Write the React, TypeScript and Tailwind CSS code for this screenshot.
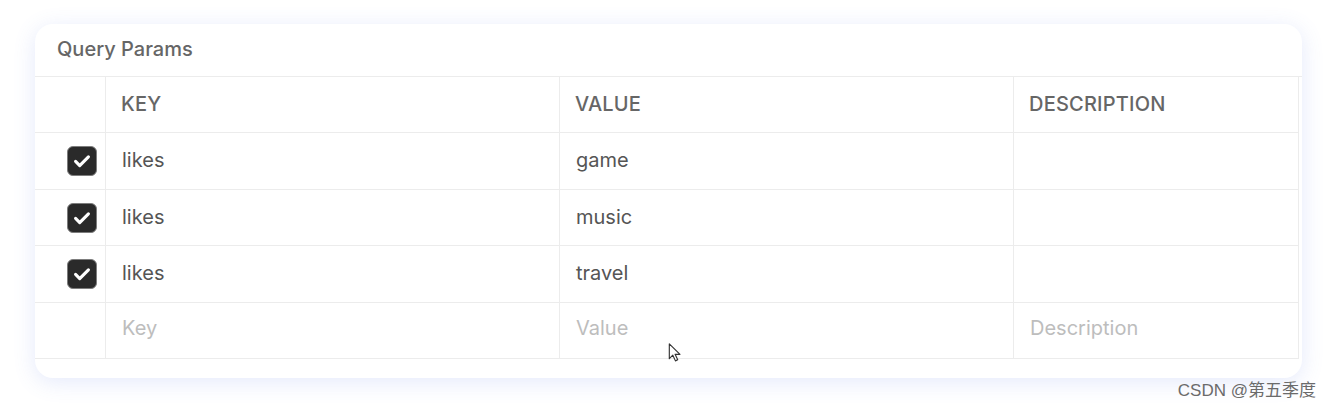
import React from "react";

interface Param {
  key: string;
  value: string;
  description: string;
  enabled: boolean;
}

const params: Param[] = [
  { key: "likes", value: "game", description: "", enabled: true },
  { key: "likes", value: "music", description: "", enabled: true },
  { key: "likes", value: "travel", description: "", enabled: true },
];

// row heights follow the screenshot's grid lines (132, 189, 245, 302)
const rowHeights = ["h-[57px]", "h-[56px]", "h-[57px]"];

const Check = () => (
  <div className="w-[30px] h-[30px] rounded-[6px] bg-[#2a2a2a] border border-[#7d7d7d] flex items-center justify-center">
    <svg viewBox="0 0 24 24" className="w-[22px] h-[22px]" fill="none">
      <path
        d="M5 12.5l4.5 4.5L19 7.5"
        stroke="white"
        strokeWidth={3.4}
        strokeLinecap="round"
        strokeLinejoin="round"
      />
    </svg>
  </div>
);

const cell = "border-r border-b border-[#ececec] flex items-center";
const head = "pl-[15px] pb-[2px] text-[20px] font-medium text-[#666] tracking-[0.2px]";
const body = "pl-[16px] pb-[2px] text-[20px] text-[#555]";
const hint = "pl-[16px] pb-[6px] text-[20px] text-[#bdbdbd]";

const App = () => {
  return (
    <div className="w-[1332px] h-[409px] bg-white relative font-['Inter',sans-serif] overflow-hidden">
      <div className="pt-[24px] pl-[35px]">
        <div className="w-[1267px] h-[354px] bg-white rounded-[18px] shadow-[0_4px_22px_rgba(90,120,230,0.16)] overflow-hidden">
          <div className="h-[53px] border-b border-[#ececec] flex items-center pl-[22px] pb-[2px]">
            <span className="text-[20px] font-medium text-[#666]">Query Params</span>
          </div>
          <div className="grid grid-cols-[71px_454px_454px_285px] w-[1264px] border-r border-[#ececec]">
            <div className={`${cell} h-[56px]`} />
            <div className={`${cell} h-[56px] ${head}`}>KEY</div>
            <div className={`${cell} h-[56px] ${head}`}>VALUE</div>
            <div className={`${cell} h-[56px] ${head}`}>DESCRIPTION</div>
            {params.map((p, i) => (
              <React.Fragment key={i}>
                <div className={`${cell} ${rowHeights[i]} justify-end pr-[8px]`}>
                  {p.enabled && <Check />}
                </div>
                <div className={`${cell} ${rowHeights[i]} ${body}`}>{p.key}</div>
                <div className={`${cell} ${rowHeights[i]} ${body}`}>{p.value}</div>
                <div className={`${cell} ${rowHeights[i]} ${body}`}>{p.description}</div>
              </React.Fragment>
            ))}
            <div className={`${cell} h-[56px]`} />
            <div className={`${cell} h-[56px] ${hint}`}>Key</div>
            <div className={`${cell} h-[56px] ${hint}`}>Value</div>
            <div className={`${cell} h-[56px] ${hint}`}>Description</div>
          </div>
        </div>
      </div>

      <svg
        viewBox="0 0 16 24"
        className="absolute left-[668px] top-[342px] w-[14px] h-[22px]"
        fill="white"
        stroke="#333"
        strokeWidth={1.3}
        strokeLinejoin="round"
      >
        <path d="M1.5 1.5v17l4-4 3 6.5 2.6-1.2-3-6.3h5.6z" />
      </svg>

      <div className="absolute right-[16px] top-[378px] text-[17px] text-[#6b6b6b] font-['Liberation_Sans','Noto_Sans_CJK_SC',sans-serif]">
        CSDN @第五季度
      </div>
    </div>
  );
};

export default App;
